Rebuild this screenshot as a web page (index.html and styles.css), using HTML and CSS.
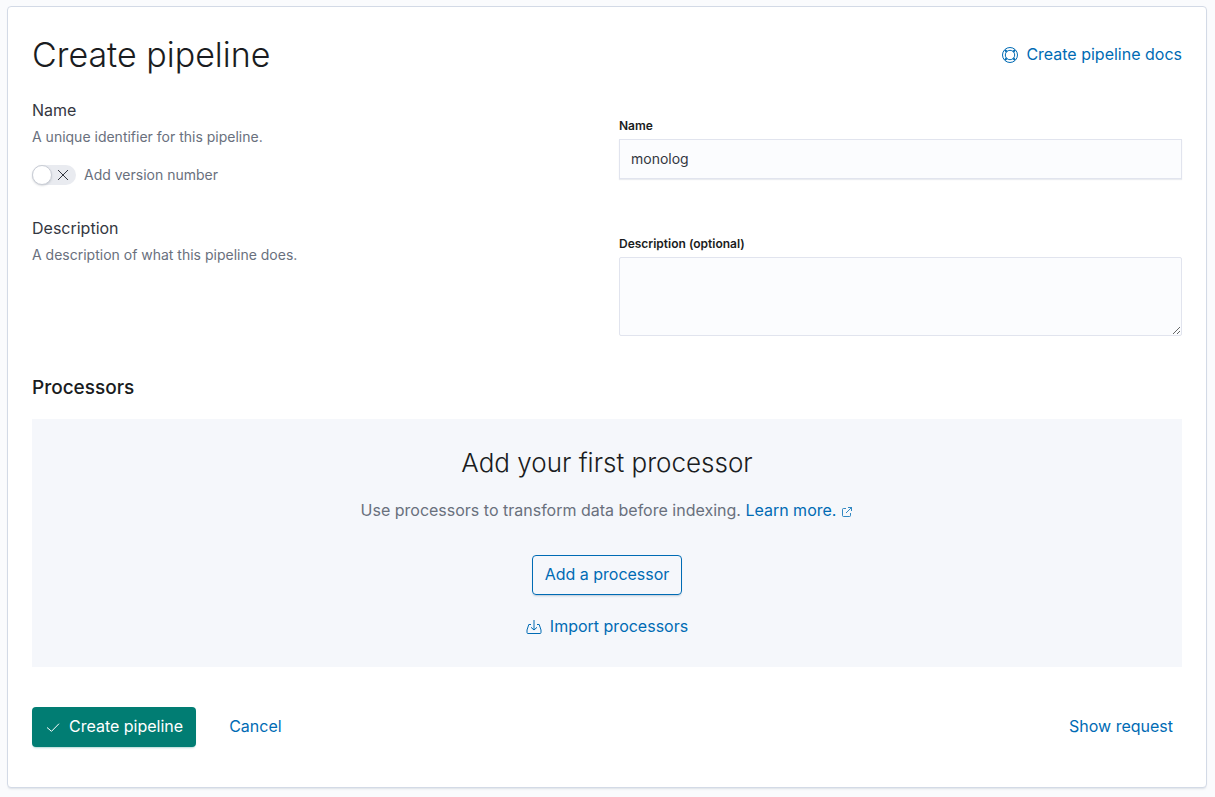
FILE: index.html
```html
<!DOCTYPE html>
<html lang="en">
<head>
<meta charset="utf-8">
<title>Create pipeline</title>
<link rel="stylesheet" href="styles.css">
</head>
<body>
<main class="panel">
  <header class="page-header">
    <h1 class="page-title">Create pipeline</h1>
    <a class="link docs-link" href="#docs">
      <svg class="icon" width="16" height="16" viewBox="0 0 16 16" fill="none" stroke="currentColor" aria-hidden="true">
        <circle cx="8" cy="8" r="7.5"/><circle cx="8" cy="8" r="4.700"/>
        <path stroke-width="2" d="M4.700 4.700L3 3M11.300 4.700L13 3M4.700 11.300L3 13M11.300 11.300L13 13"/>
      </svg>
      <span>Create pipeline docs</span>
    </a>
  </header>
  <form class="form">
    <section class="field-group">
      <div class="about">
        <h2 class="about-title">Name</h2>
        <p class="about-text">A unique identifier for this pipeline.</p>
        <label class="switch">
          <input class="switch-input" type="checkbox" role="switch">
          <span class="switch-track">
            <span class="switch-thumb"></span>
            <svg width="12" height="12" viewBox="0 0 12 12" fill="none" stroke="currentColor" aria-hidden="true"><path d="M1 1l10 10M11 1L1 11"/></svg>
          </span>
          <span>Add version number</span>
        </label>
      </div>
      <div class="field">
        <label class="field-label" for="name">Name</label>
        <input class="control" id="name" type="text" value="monolog">
      </div>
    </section>
    <section class="field-group">
      <div class="about">
        <h2 class="about-title">Description</h2>
        <p class="about-text">A description of what this pipeline does.</p>
      </div>
      <div class="field">
        <label class="field-label" for="description">Description (optional)</label>
        <textarea class="control control-area" id="description"></textarea>
      </div>
    </section>
    <section class="processors">
      <h2 class="section-title">Processors</h2>
      <div class="empty">
        <h3 class="empty-title">Add your first processor</h3>
        <p class="empty-text">Use processors to transform data before indexing.
          <a class="link" href="#learn">Learn more.<svg class="external" width="12" height="12" viewBox="0 0 12 12" fill="none" stroke="currentColor" stroke-width="0.800" aria-hidden="true"><path d="M5 2.500H2.500a1 1 0 0 0-1 1v6a1 1 0 0 0 1 1h6a1 1 0 0 0 1-1V7M7 1.500h3.500V5M10.500 1.500L5 7"/></svg></a></p>
        <button class="button button-outline" type="button">Add a processor</button>
        <button class="button button-import" type="button">
          <svg class="icon" width="16" height="16" viewBox="0 0 16 16" fill="none" stroke="currentColor" aria-hidden="true"><path d="M5 5.500H2.800L1 11v2.500a1 1 0 0 0 1 1h12a1 1 0 0 0 1-1V11l-1.800-5.500H11M8 1v10M5 8.300l3 2.700 3-2.700"/></svg>
          <span>Import processors</span>
        </button>
      </div>
    </section>
    <footer class="actions">
      <button class="button button-primary" type="button">
        <svg class="icon" width="16" height="16" viewBox="0 0 16 16" fill="none" stroke="currentColor" aria-hidden="true"><path d="M2 8.500l4.500 3.800L14 4.700"/></svg>
        <span>Create pipeline</span>
      </button>
      <button class="button button-text" type="button">Cancel</button>
      <button class="button button-text button-request" type="button">Show request</button>
    </footer>
  </form>
</main>
</body>
</html>
```
FILE: styles.css
```css
* { box-sizing: border-box; }
body {
  margin: 0;
  padding: 6px 8px 8px 7px;
  background: #fafbfd;
  color: #343741;
  font: 16px/24px Inter, "Liberation Sans", sans-serif;
}
h1, h2, h3, p { margin: 0; }
.panel {
  padding: 24px 24px 40px;
  background: #fff;
  border: 1px solid #d3dae6;
  border-radius: 4px;
  box-shadow: 0 2px 2px -1px rgba(152, 162, 179, 0.3);
}
.page-header { display: flex; justify-content: space-between; align-items: flex-start; }
.page-title { color: #1a1c21; font-size: 34px; line-height: 48px; font-weight: 300; }
.link { color: #006bb4; text-decoration: none; }
.docs-link { display: flex; align-items: center; gap: 8px; padding: 11px 0; }
.icon { flex: none; margin-top: 2px; }
.field-group { display: grid; grid-template-columns: 1fr 1fr; gap: 24px; padding: 20px 0 12px; }
.about-title { font-size: 16px; font-weight: 400; line-height: 22px; }
.about-text { padding-top: 6px; color: #69707d; font-size: 14px; line-height: 20px; }
.switch { display: flex; align-items: center; gap: 8px; padding-top: 18px; color: #69707d; font-size: 14px; line-height: 20px; }
.switch-input { position: absolute; opacity: 0; }
.switch-track { display: flex; align-items: center; justify-content: space-between; width: 44px; height: 20px; padding-right: 7px; border-radius: 10px; background: #e9ebf0; color: #343741; }
.switch-thumb { width: 20px; height: 20px; border: 1px solid #c9cdd5; border-radius: 50%; background: #fff; box-shadow: 0 1px 2px rgba(105, 112, 125, 0.25); }
.field { padding-top: 18px; }
.field-label { display: block; padding-bottom: 4px; color: #1a1c21; font-size: 12px; font-weight: 600; line-height: 18px; }
.control { display: block; width: 100%; height: 40px; padding: 10px 11px 12px; border: 1px solid #e1e4ee; border-radius: 0; background: #fbfcfe; color: #343741; font: 14px/16px Inter, sans-serif; box-shadow: 0 1px 1px rgba(152, 162, 179, 0.2); }
.control-area { height: 79px; border-radius: 2px; box-shadow: none; resize: vertical; }
.processors { padding-top: 27px; }
.section-title { color: #1a1c21; font-size: 19px; font-weight: 500; line-height: 26px; }
.empty { display: flex; flex-direction: column; align-items: center; margin-top: 18px; padding: 24px 24px 20px; background: #f5f7fb; }
.empty-title { color: #1a1c21; font-size: 26px; font-weight: 300; line-height: 40px; }
.empty-text { padding: 15px 0 1px; color: #69707d; }
.external { margin-left: 5px; vertical-align: -2px; }
.button { display: flex; align-items: center; justify-content: center; gap: 8px; height: 40px; padding: 0 12px 2px; border: 1px solid transparent; border-radius: 4px; background: transparent; color: #006bb4; font: 16px/24px Inter, sans-serif; cursor: pointer; }
.button-outline { margin-top: 32px; border-color: #006bb4; box-shadow: 0 2px 2px -1px rgba(54, 97, 126, 0.3); }
.button-import { margin-top: 12px; }
.actions { display: flex; align-items: center; gap: 24px; padding-top: 40px; }
.button-primary { background: #017d73; color: #fff; box-shadow: 0 2px 2px -1px rgba(1, 125, 115, 0.3); }
.button-text { padding: 0 8px 2px; }
.button-request { margin-left: auto; }
```
